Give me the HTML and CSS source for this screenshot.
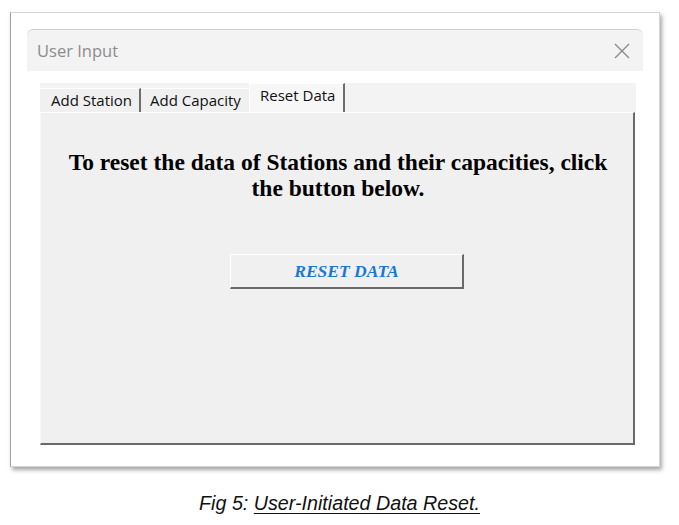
FILE: index.html
```html
<!DOCTYPE html>
<html>
<head>
<meta charset="utf-8">
<link rel="stylesheet" href="styles.css">
</head>
<body>
<div class="frame">
  <div class="titlebar">
    <span class="title">User Input</span>
    <svg class="close" width="16" height="16" viewBox="0 0 16 16"><path d="M1 1 L15 15 M15 1 L1 15" stroke="#8a8a8a" stroke-width="1.4" fill="none"/></svg>
  </div>
  <div class="content">
    <div class="tabs">
      <div class="tab tab1">Add Station</div>
      <div class="tab tab2">Add Capacity</div>
      <div class="tab tab3 active">Reset Data</div>
    </div>
    <div class="panel">
      <p class="msg">To reset the data of Stations and their capacities, click the button below.</p>
      <div class="btn">RESET DATA</div>
    </div>
  </div>
</div>
<p class="caption">Fig 5: <u>User-Initiated Data Reset.</u></p>
</body>
</html>
```
FILE: styles.css
```css
html, body { margin: 0; padding: 0; background: #fff; }
body { width: 679px; height: 525px; overflow: hidden; font-family: "Open Sans", "Noto Sans", sans-serif; }

.frame {
  margin: 12px 0 0 10px;
  width: 650px;
  height: 455px;
  box-sizing: border-box;
  background: #fff;
  border: 1px solid #d4d4d4;
  border-left-color: #a0a0a0;
  box-shadow: 2px 3px 4px rgba(0,0,0,0.35);
  padding: 16px 16px 0 16px;
}

.titlebar {
  height: 42px;
  box-sizing: border-box;
  background: #f3f3f3;
  border-top: 1px solid #cfcfcf;
  border-radius: 6px 6px 0 0;
  display: flex;
  align-items: center;
  justify-content: space-between;
  padding: 0 13px 0 10px;
}
.title { color: #8c8c8c; font-size: 16.5px; }
.close { display: block; }

.content { margin: 12px 7px 0 13px; }

.tabs {
  display: flex;
  align-items: flex-end;
  height: 29px;
  background: #f3f3f3;
}
.tab {
  box-sizing: border-box;
  height: 24px;
  font-size: 15px;
  line-height: 22px;
  color: #111;
  border-top: 1px solid #fff;
  background: #f0f0f0;
}
.tab1 { width: 101px; padding-left: 11px; border-right: 2px solid #6d6d6d; }
.tab2 { width: 108px; padding-left: 9px; }
.tab3 { width: 96px; padding-left: 10px; }
.tab.active {
  height: 29px;
  line-height: 23px;
  background: #f7f7f7;
  border-top: 1px solid #fff;
  border-left: 1px solid #fff;
  border-right: 2px solid #6d6d6d;
}

.panel {
  width: 595px;
  height: 333px;
  box-sizing: border-box;
  background: #f0f0f0;
  border-top: 1px solid #fff;
  border-left: 1px solid #f8f8f8;
  border-right: 2px solid #6a6a6a;
  border-bottom: 2px solid #6a6a6a;
  padding-top: 36px;
}
.msg {
  margin: 0;
  padding: 0 18px 0 20px;
  text-align: center;
  font-family: "Liberation Serif", "Times New Roman", serif;
  font-weight: bold;
  font-size: 23.5px;
  line-height: 26px;
  color: #000;
}
.btn {
  margin: 53px 0 0 189px;
  width: 234px;
  height: 35px;
  box-sizing: border-box;
  background: #f0f0f0;
  border-top: 1px solid #fff;
  border-left: 1px solid #fff;
  border-right: 2px solid #6a6a6a;
  border-bottom: 2px solid #6a6a6a;
  text-align: center;
  font-family: "Liberation Serif", "Times New Roman", serif;
  font-weight: bold;
  font-style: italic;
  font-size: 17.5px;
  line-height: 32px;
  color: #1a78d4;
}

.caption {
  margin: 25px 0 0 0;
  text-align: center;
  font-family: "Liberation Sans", Arial, sans-serif;
  font-style: italic;
  font-size: 19.7px;
  color: #111;
}
.caption u { text-underline-offset: 3px; }
```
